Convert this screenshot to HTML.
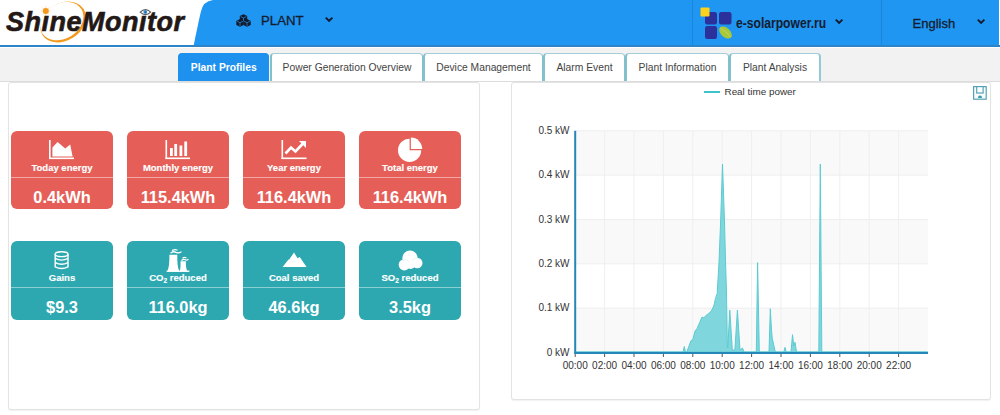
<!DOCTYPE html>
<html><head><meta charset="utf-8">
<style>
*{margin:0;padding:0;box-sizing:border-box}
html,body{width:1000px;height:415px;overflow:hidden;background:#fff;font-family:"Liberation Sans",sans-serif;position:relative}
.abs{position:absolute}
#hdr{left:0;top:0;width:1000px;height:47px;background:#fff}
#hline{left:0;top:44.5px;width:1000px;height:2.3px;background:#2d84c6}
#tabbar{left:0;top:47.5px;width:1000px;height:34px;background:#f2f2f2}
#tabline{left:0;top:81px;width:1000px;height:1px;background:#dcdcdc}
.tab{position:absolute;top:53px;height:28px;background:#fff;border-top:1px solid #a3cdd8;border-left:2px solid #84bfcc;border-right:1px solid #84bfcc;border-bottom:none;border-radius:4px 4px 0 0;font-size:10.3px;color:#444;text-align:center;line-height:27px;white-space:nowrap}
.tab.act{background:#1e91ee;border-color:#1e91ee;color:#fff;font-weight:bold}
.panel{position:absolute;background:#fff;border:1px solid #e3e3e3;border-radius:3px;box-shadow:0 1px 1px rgba(0,0,0,.06)}
.card{position:absolute;width:102px;height:78px;border-radius:6px;color:#fff;font-weight:bold;text-align:center}
.red{background:#e55f58}
.teal{background:#2da8b0;height:78.5px}
.teal .div{top:47px}
.teal .val{top:57.5px}
.teal .lab{top:32.3px}
.card .div{position:absolute;left:0;top:46px;width:100%;height:1px;background:rgba(255,255,255,.45)}
.card .lab{position:absolute;left:0;width:100%;top:31px;font-size:9.5px;line-height:11px;white-space:nowrap;-webkit-text-stroke:0.15px #fff}
.card .val{position:absolute;left:0;width:100%;top:57px;font-size:16.4px;line-height:18px;white-space:nowrap}
.card svg{position:absolute;left:0;top:0}
.hdrtxt{position:absolute;color:#151c30;white-space:nowrap}
</style></head><body>
<div id="hdr" class="abs"></div>
<!-- blue header shape -->
<svg class="abs" style="left:0;top:0" width="1000" height="47">
  <path d="M193.8 45 C196 34 198.5 22 200.8 12 Q203 1 213 0 L999 0 L999 45 Z" fill="#1f96f2"/>
  <line x1="692.5" y1="0" x2="692.5" y2="45" stroke="#1a86db" stroke-width="1"/>
  <line x1="881.5" y1="0" x2="881.5" y2="45" stroke="#1a86db" stroke-width="1"/>
</svg>
<div id="hline" class="abs"></div>
<div class="abs" style="left:0;top:46.5px;width:1000px;height:1px;background:#fff"></div>

<!-- logo -->
<svg class="abs" style="left:0;top:0" width="200" height="46">
  <ellipse cx="63" cy="22" rx="24.3" ry="18.7" transform="rotate(-32 63 22)" fill="#f39a1e"/><ellipse cx="61.8" cy="21.1" rx="23" ry="17.6" transform="rotate(-32 61.8 21.1)" fill="#fff"/>
  <g stroke="#fbd9a6" stroke-width="0.8"><line x1="45.8" y1="6" x2="45.8" y2="16"/><line x1="40.8" y1="11" x2="50.8" y2="11"/><line x1="42.3" y1="7.5" x2="49.3" y2="14.5"/><line x1="49.3" y1="7.5" x2="42.3" y2="14.5"/></g><circle cx="45.8" cy="11" r="3" fill="#f5961c"/>
</svg>
<div class="hdrtxt" style="left:6px;top:7px;font-size:27px;font-weight:bold;font-style:italic;color:#231815;letter-spacing:0.5px;-webkit-text-stroke:0.6px #231815">Sh&#305;neMon&#305;tor</div>
<svg class="abs" style="left:0;top:0" width="160" height="20"><path d="M140.2 12.2 Q145.4 7.2 150.7 12.2 Q145.4 17.1 140.2 12.2Z" fill="#fff" stroke="#5a5a5a" stroke-width="1.1"/><circle cx="145.3" cy="12" r="1.9" fill="#3d94d6"/><circle cx="145.5" cy="12.1" r="0.9" fill="#1d5e94"/></svg>

<!-- PLANT -->
<svg class="abs" style="left:236px;top:13.5px" width="15" height="13" viewBox="0 0 15 13">
  <g fill="#141a2a"><path d="M7.5 0.3 L11.2 2.1 L11.2 6.1 L7.5 7.9 L3.8 6.1 L3.8 2.1Z"/><path d="M4 5.1 L7.6 6.9 L7.6 10.9 L4 12.7 L0.3 10.9 L0.3 6.9Z"/><path d="M11 5.1 L14.7 6.9 L14.7 10.9 L11 12.7 L7.4 10.9 L7.4 6.9Z"/></g>
  <g fill="none" stroke="#1f96f2" stroke-width="0.7"><path d="M4.6 2.5 L7.5 3.9 L10.4 2.5 M7.5 3.9 V7.2"/><path d="M1.1 7.3 L4 8.7 L6.9 7.3 M4 8.7 V12"/><path d="M8.1 7.3 L11 8.7 L13.9 7.3 M11 8.7 V12"/></g>
</svg>
<div class="hdrtxt" style="left:261px;top:13.5px;font-size:13.2px;line-height:14px;-webkit-text-stroke:0.3px #151c30">PLANT</div>
<svg class="abs" style="left:324px;top:16px" width="11" height="8"><path d="M1.8 1.6 L5.1 4.9 L8.4 1.6" fill="none" stroke="#151c30" stroke-width="2"/></svg>

<!-- e-solarpower logo -->
<svg class="abs" style="left:699px;top:6px" width="36" height="36">
  <rect x="6" y="6" width="12" height="12.5" rx="2.2" fill="#2b309a"/>
  <rect x="20" y="6" width="12.5" height="12.5" rx="2.2" fill="#2b309a"/>
  <rect x="6" y="20" width="12" height="13" rx="2.2" fill="#2b309a"/>
  <rect x="1.5" y="1.5" width="9" height="9" rx="1" fill="#fdd21c"/>
  <ellipse cx="26.5" cy="26.5" rx="7.5" ry="4.6" transform="rotate(42 26.5 26.5)" fill="#a8c83a"/>
  <path d="M21.5 22 Q27 25 31.5 31" fill="none" stroke="#c9dc5a" stroke-width="0.8"/>
</svg>
<div class="hdrtxt" style="left:736px;top:14.5px;font-size:14px;font-weight:bold;line-height:16px;transform:scaleX(0.865);transform-origin:0 0">e-solarpower.ru</div>
<svg class="abs" style="left:834px;top:18px" width="11" height="8"><path d="M1.8 1.6 L5.1 4.9 L8.4 1.6" fill="none" stroke="#151c30" stroke-width="2"/></svg>

<div class="hdrtxt" style="left:912.5px;top:16.5px;font-size:13px;line-height:14px;-webkit-text-stroke:0.3px #151c30">English</div>
<svg class="abs" style="left:976px;top:18px" width="11" height="8"><path d="M1.8 1.6 L5.1 4.9 L8.4 1.6" fill="none" stroke="#151c30" stroke-width="2"/></svg>

<div id="tabbar" class="abs"></div>
<div id="tabline" class="abs"></div>

<div class="tab act" style="left:177.5px;width:91.5px">Plant Profiles</div>
<div class="tab" style="left:270px;width:153px">Power Generation Overview</div>
<div class="tab" style="left:423px;width:120px">Device Management</div>
<div class="tab" style="left:543px;width:82px">Alarm Event</div>
<div class="tab" style="left:625px;width:104px">Plant Information</div>
<div class="tab" style="left:729px;width:92px;border-right-width:2px;border-right-color:#93c9d6">Plant Analysis</div>

<!-- panels -->
<div class="panel" style="left:8px;top:82px;width:472px;height:328px"></div>
<div class="panel" style="left:511px;top:82px;width:480px;height:318px"></div>

<!-- cards row 1 -->
<div class="card red" style="left:11px;top:130.8px">
  <svg width="102" height="46"><g fill="#fff"><rect x="38" y="9" width="1.6" height="19"/><rect x="38" y="26.5" width="25" height="1.6"/><path d="M41.4 25.6 L41.4 16.6 L46.6 11 L54.2 17.6 L59.2 13.4 L61.6 25.6Z"/></g></svg>
  <div class="div"></div><div class="lab">Today energy</div><div class="val">0.4kWh</div></div>
<div class="card red" style="left:127px;top:130.8px">
  <svg width="102" height="46"><g fill="#fff"><rect x="38.5" y="9" width="1.6" height="19"/><rect x="38.5" y="26.5" width="24.5" height="1.6"/><rect x="43" y="17" width="2.8" height="8"/><rect x="47.3" y="13" width="2.8" height="12"/><rect x="52.5" y="14.5" width="2.8" height="10.5"/><rect x="57.3" y="10.5" width="2.8" height="14.5"/></g></svg>
  <div class="div"></div><div class="lab">Monthly energy</div><div class="val">115.4kWh</div></div>
<div class="card red" style="left:243px;top:130.8px">
  <svg width="102" height="46"><g fill="#fff"><rect x="38.5" y="9" width="1.6" height="19"/><rect x="38.5" y="26.5" width="25" height="1.6"/></g><path d="M42.5 22.5 L48 16.5 L52.5 20.5 L60 12.5" fill="none" stroke="#fff" stroke-width="2.6" stroke-linejoin="miter"/><path d="M56 10 L63 10 L63 17Z" fill="#fff"/></svg>
  <div class="div"></div><div class="lab">Year energy</div><div class="val">116.4kWh</div></div>
<div class="card red" style="left:359px;top:130.8px">
  <svg width="102" height="46"><path d="M50.6 7.7 A11.6 11.6 0 1 0 62.2 19.3 L50.6 19.3Z" fill="#fff"/><path d="M51.9 6.6 A11.3 11.3 0 0 1 63.2 17.9 L51.9 17.9Z" fill="#fff"/></svg>
  <div class="div"></div><div class="lab">Total energy</div><div class="val">116.4kWh</div></div>

<!-- cards row 2 -->
<div class="card teal" style="left:11px;top:241px">
  <svg width="102" height="46"><g fill="none" stroke="#fff" stroke-width="1.4"><ellipse cx="50.6" cy="13.2" rx="6.4" ry="2.4"/><path d="M44.2 13.2 V25.8 Q50.6 29.2 57 25.8 V13.2"/><path d="M44.2 17.4 Q50.6 20.8 57 17.4"/><path d="M44.2 21.6 Q50.6 25 57 21.6"/></g></svg>
  <div class="div"></div><div class="lab">Gains</div><div class="val">$9.3</div></div>
<div class="card teal" style="left:127px;top:241px">
  <svg width="102" height="46"><g fill="#fff"><path d="M40.4 30.6 Q42.6 25 42.4 13.8 L50.3 13.8 Q50 25 52.3 30.6Z"/><path d="M52.7 30.6 Q53.8 27 53.5 20.3 L58.9 20.3 Q58.6 27 60.4 30.6Z"/><rect x="39.6" y="29.5" width="22.8" height="1.4"/></g><g fill="none" stroke="#fff" stroke-width="1.3" stroke-linecap="round"><path d="M44 11.8 Q46.5 10 49 11.3 Q51.5 12.5 54 11"/><path d="M45.5 9.3 Q48 8 50 9"/><path d="M54.8 19.2 Q56.5 17.8 58.3 18.8 Q59.8 19.6 61 18.4"/><path d="M56 16.9 Q57.5 16 59 16.8"/></g></svg>
  <div class="div"></div><div class="lab">CO<span style="font-size:6.5px;vertical-align:-1.5px">2</span> reduced</div><div class="val">116.0kg</div></div>
<div class="card teal" style="left:243px;top:241px">
  <svg width="102" height="46"><path d="M39.6 26 L45.5 18.5 L46 18.8 L51 11.6 L54.6 17.2 L56.7 16 L63.6 26Z" fill="#fff"/><path d="M47 21.5 L49 19.8 L50.5 21 L52.5 19.5" fill="none" stroke="#dfeff0" stroke-width="0.6"/></svg>
  <div class="div"></div><div class="lab">Coal saved</div><div class="val">46.6kg</div></div>
<div class="card teal" style="left:359px;top:241px">
  <svg width="102" height="46"><g fill="#fff"><circle cx="51" cy="17.2" r="7.6"/><circle cx="45.3" cy="23.8" r="5.6"/><circle cx="58.3" cy="22" r="5.2"/><circle cx="51.5" cy="23" r="5"/></g><g fill="none" stroke="#d8ecee" stroke-width="0.6"><path d="M41.5 21 A5.6 5.6 0 0 1 50 20.5"/><path d="M53.5 19 A5.2 5.2 0 0 1 61 18.5"/></g></svg>
  <div class="div"></div><div class="lab">SO<span style="font-size:6.5px;vertical-align:-1.5px">2</span> reduced</div><div class="val">3.5kg</div></div>

<!-- chart -->
<svg class="abs" style="left:0;top:0" width="1000" height="415" id="chart">
<rect x="575.2" y="130.80" width="352.80" height="44.34" fill="#f9f9f9"/>
<rect x="575.2" y="219.48" width="352.80" height="44.34" fill="#f9f9f9"/>
<rect x="575.2" y="308.16" width="352.80" height="44.34" fill="#f9f9f9"/>
<line x1="575.2" y1="130.80" x2="928.00" y2="130.80" stroke="#eeeeee" stroke-width="1"/>
<line x1="575.2" y1="175.14" x2="928.00" y2="175.14" stroke="#eeeeee" stroke-width="1"/>
<line x1="575.2" y1="219.48" x2="928.00" y2="219.48" stroke="#eeeeee" stroke-width="1"/>
<line x1="575.2" y1="263.82" x2="928.00" y2="263.82" stroke="#eeeeee" stroke-width="1"/>
<line x1="575.2" y1="308.16" x2="928.00" y2="308.16" stroke="#eeeeee" stroke-width="1"/>
<line x1="604.60" y1="130.8" x2="604.60" y2="352.5" stroke="#efefef" stroke-width="1"/>
<line x1="634.00" y1="130.8" x2="634.00" y2="352.5" stroke="#efefef" stroke-width="1"/>
<line x1="663.40" y1="130.8" x2="663.40" y2="352.5" stroke="#efefef" stroke-width="1"/>
<line x1="692.80" y1="130.8" x2="692.80" y2="352.5" stroke="#efefef" stroke-width="1"/>
<line x1="722.20" y1="130.8" x2="722.20" y2="352.5" stroke="#efefef" stroke-width="1"/>
<line x1="751.60" y1="130.8" x2="751.60" y2="352.5" stroke="#efefef" stroke-width="1"/>
<line x1="781.00" y1="130.8" x2="781.00" y2="352.5" stroke="#efefef" stroke-width="1"/>
<line x1="810.40" y1="130.8" x2="810.40" y2="352.5" stroke="#efefef" stroke-width="1"/>
<line x1="839.80" y1="130.8" x2="839.80" y2="352.5" stroke="#efefef" stroke-width="1"/>
<line x1="869.20" y1="130.8" x2="869.20" y2="352.5" stroke="#efefef" stroke-width="1"/>
<line x1="898.60" y1="130.8" x2="898.60" y2="352.5" stroke="#efefef" stroke-width="1"/>
<path d="M575.5,352 L683,352 L684.3,346.5 L685.5,352 L686.8,352 L688.5,347.3 L691,340.6 L692.7,339.7 L695.2,330.5 L697,328.8 L699.5,322.9 L702,317 L703.7,317.8 L706.2,315.3 L708.7,313.6 L711.3,311 L713.8,306 L715.5,298.4 L717.2,293.4 L719,262 L720.5,225 L722.5,164 L724.5,222 L725.5,260 L726.5,293 L727.3,345 L727.8,348 L729.8,310.2 L732.3,350 L734.9,350 L737.4,310.2 L740,350 L742.5,348 L744,352 L756.3,352 L757.6,262.6 L759.3,352 L769,352 L770.3,308.7 L771.5,330 L772.3,338.5 L775.3,352 L783.8,352 L785,347.4 L786.2,352 L791,352 L792.5,334.7 L793.8,346 L795,342.3 L796.5,352 L818.8,352 L820.3,164 L821.8,352 L927.7,352 Z" fill="#7fd6dc" stroke="#5ccbd2" stroke-width="1" stroke-linejoin="round"/>
<rect x="574.2" y="130.8" width="2" height="222.7" fill="#2686b8"/>
<rect x="574.2" y="352.0" width="353.80" height="2" fill="#2686b8"/>
<line x1="575.20" y1="354.0" x2="575.20" y2="357.0" stroke="#555" stroke-width="1"/>
<line x1="604.60" y1="354.0" x2="604.60" y2="357.0" stroke="#555" stroke-width="1"/>
<line x1="634.00" y1="354.0" x2="634.00" y2="357.0" stroke="#555" stroke-width="1"/>
<line x1="663.40" y1="354.0" x2="663.40" y2="357.0" stroke="#555" stroke-width="1"/>
<line x1="692.80" y1="354.0" x2="692.80" y2="357.0" stroke="#555" stroke-width="1"/>
<line x1="722.20" y1="354.0" x2="722.20" y2="357.0" stroke="#555" stroke-width="1"/>
<line x1="751.60" y1="354.0" x2="751.60" y2="357.0" stroke="#555" stroke-width="1"/>
<line x1="781.00" y1="354.0" x2="781.00" y2="357.0" stroke="#555" stroke-width="1"/>
<line x1="810.40" y1="354.0" x2="810.40" y2="357.0" stroke="#555" stroke-width="1"/>
<line x1="839.80" y1="354.0" x2="839.80" y2="357.0" stroke="#555" stroke-width="1"/>
<line x1="869.20" y1="354.0" x2="869.20" y2="357.0" stroke="#555" stroke-width="1"/>
<line x1="898.60" y1="354.0" x2="898.60" y2="357.0" stroke="#555" stroke-width="1"/>
<text x="569.5" y="134.00" text-anchor="end" font-size="10" fill="#333">0.5 kW</text>
<text x="569.5" y="178.34" text-anchor="end" font-size="10" fill="#333">0.4 kW</text>
<text x="569.5" y="222.68" text-anchor="end" font-size="10" fill="#333">0.3 kW</text>
<text x="569.5" y="267.02" text-anchor="end" font-size="10" fill="#333">0.2 kW</text>
<text x="569.5" y="311.36" text-anchor="end" font-size="10" fill="#333">0.1 kW</text>
<text x="569.5" y="355.70" text-anchor="end" font-size="10" fill="#333">0 kW</text>
<text x="575.20" y="369.2" text-anchor="middle" font-size="10" fill="#333">00:00</text>
<text x="604.60" y="369.2" text-anchor="middle" font-size="10" fill="#333">02:00</text>
<text x="634.00" y="369.2" text-anchor="middle" font-size="10" fill="#333">04:00</text>
<text x="663.40" y="369.2" text-anchor="middle" font-size="10" fill="#333">06:00</text>
<text x="692.80" y="369.2" text-anchor="middle" font-size="10" fill="#333">08:00</text>
<text x="722.20" y="369.2" text-anchor="middle" font-size="10" fill="#333">10:00</text>
<text x="751.60" y="369.2" text-anchor="middle" font-size="10" fill="#333">12:00</text>
<text x="781.00" y="369.2" text-anchor="middle" font-size="10" fill="#333">14:00</text>
<text x="810.40" y="369.2" text-anchor="middle" font-size="10" fill="#333">16:00</text>
<text x="839.80" y="369.2" text-anchor="middle" font-size="10" fill="#333">18:00</text>
<text x="869.20" y="369.2" text-anchor="middle" font-size="10" fill="#333">20:00</text>
<text x="898.60" y="369.2" text-anchor="middle" font-size="10" fill="#333">22:00</text>
<rect x="704" y="91" width="16" height="2" fill="#3fc3cb"/>
<text x="724.5" y="95" font-size="9.9" fill="#333">Real time power</text>
<g stroke="#55a2b8" stroke-width="1.2"><rect x="973.6" y="86.6" width="12.6" height="12.6" fill="#f7fbfc"/><rect x="976.7" y="86.6" width="6.4" height="6.4" fill="#fff"/></g><path d="M978.1 97.9 V96.6 Q980 94.4 981.9 96.6 V97.9 Z" fill="#3f9cb0"/>
</svg>
</body></html>
